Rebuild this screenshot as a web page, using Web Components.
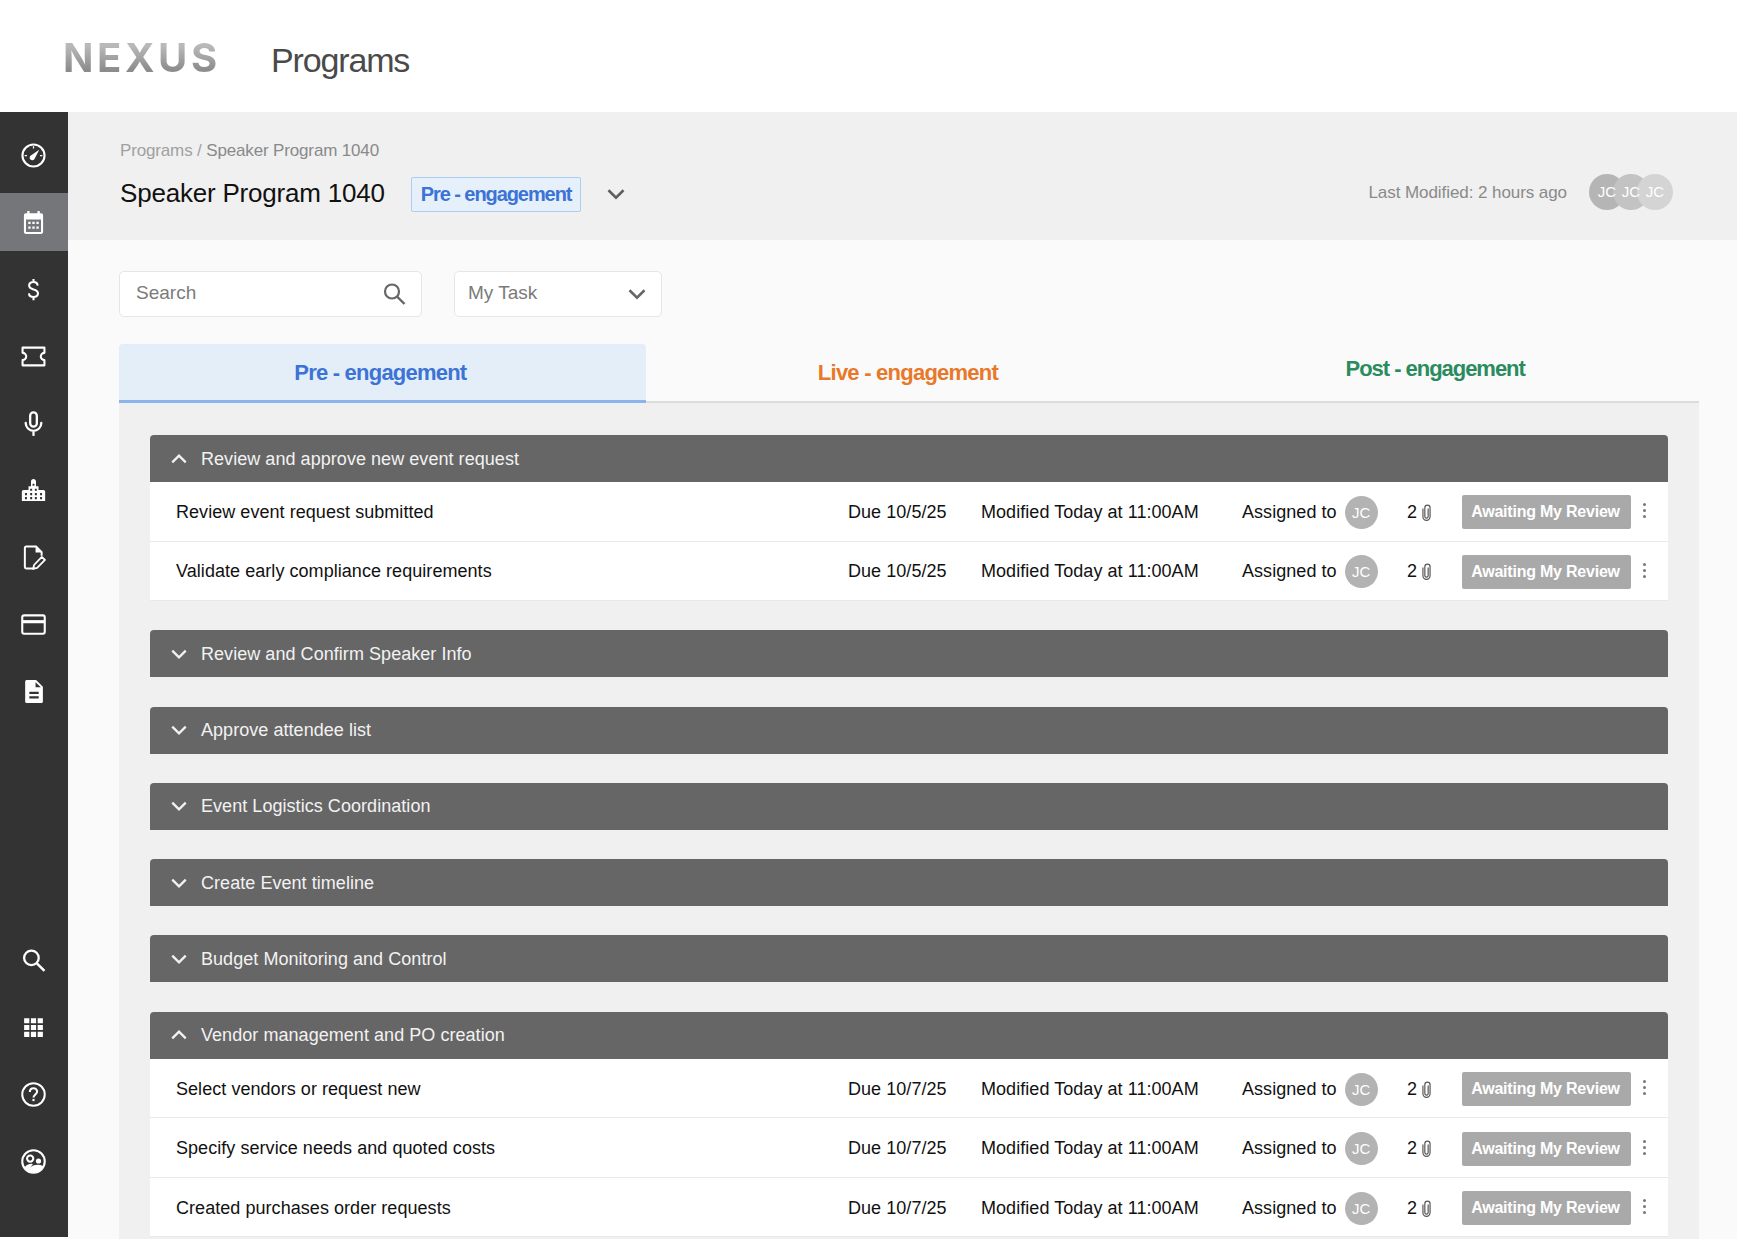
<!DOCTYPE html>
<html lang="en">
<head>
<meta charset="utf-8">
<title>Programs</title>
<style>
  html, body { margin: 0; height: 1239px; overflow: hidden; background: #fff; }
  body { font-family: "Liberation Sans", Arial, sans-serif; }
</style>
</head>
<body>
<nx-app>
  <nx-topbar slot="top" heading="Programs"></nx-topbar>
  <nx-sidebar slot="side"></nx-sidebar>
  <nx-program-header slot="head" crumb="Speaker Program 1040" name="Speaker Program 1040" stage="Pre - engagement" modified="Last Modified: 2 hours ago"></nx-program-header>
  <nx-toolbar slot="main"></nx-toolbar>
  <nx-tabs slot="main"></nx-tabs>
  <nx-panel slot="main">
    <nx-group label="Review and approve new event request" open>
      <nx-row name="Review event request submitted" due="Due 10/5/25"></nx-row>
      <nx-row name="Validate early compliance requirements" due="Due 10/5/25"></nx-row>
    </nx-group>
    <nx-group label="Review and Confirm Speaker Info"></nx-group>
    <nx-group label="Approve attendee list"></nx-group>
    <nx-group label="Event Logistics Coordination"></nx-group>
    <nx-group label="Create Event timeline"></nx-group>
    <nx-group label="Budget Monitoring and Control"></nx-group>
    <nx-group label="Vendor management and PO creation" open>
      <nx-row name="Select vendors or request new" due="Due 10/7/25"></nx-row>
      <nx-row name="Specify service needs and quoted costs" due="Due 10/7/25"></nx-row>
      <nx-row name="Created purchases order requests" due="Due 10/7/25"></nx-row>
    </nx-group>
  </nx-panel>
</nx-app>

<script>
// Iconos dibujados a mano sobre una caja de 24x24
const ICONS = {
  gauge: '<circle cx="12" cy="12" r="10.600" fill="none" stroke="currentColor" stroke-width="2"/><path d="M17.500 6.500 9.800 11.800a2.500 2.500 0 1 0 3.300 3.300z" fill="currentColor"/><path d="M12 3v2.200M3.500 12h2.200M20.500 12h-2.200" stroke="currentColor" stroke-width="1.200"/>',
  calendar: '<path fill-rule="evenodd" d="M6 1h2.200v2.200h7.600V1H18v2.200h1.400c1 0 1.800.8 1.800 1.800v16.200c0 1-.8 1.800-1.800 1.800H4.600c-1 0-1.800-.8-1.800-1.800V5c0-1 .8-1.800 1.800-1.800H6zM4.800 9v12h14.400V9z" fill="currentColor"/><path d="M7 11.300h2.200v2.200H7zm3.900 0h2.200v2.200h-2.200zm3.900 0H17v2.200h-2.200zM7 15.800h2.200V18H7zm3.900 0h2.200V18h-2.200zm3.900 0H17V18h-2.200z" fill="currentColor"/>',
  dollar: '<path d="M16 8.200C15.800 6 14.200 4.800 12 4.800c-2.400 0-4.200 1.300-4.200 3.400 0 2 1.700 3 4.200 3.700 2.600.7 4.300 1.700 4.300 3.800 0 2.200-1.900 3.500-4.300 3.500-2.500 0-4.200-1.300-4.400-3.500M12 1.800v3M12 19.200v3" fill="none" stroke="currentColor" stroke-width="2"/>',
  ticket: '<path d="M1.500 3.500h21v5a3.500 3.500 0 0 0 0 7v5h-21v-5a3.500 3.500 0 0 0 0-7z" fill="none" stroke="currentColor" stroke-width="2" stroke-linejoin="round"/>',
  mic: '<rect x="8.800" y="1.300" width="6.400" height="13.700" rx="3.200" fill="none" stroke="currentColor" stroke-width="2.200"/><path d="M4.500 11.500a7.500 7.500 0 0 0 15 0M12 19v4" fill="none" stroke="currentColor" stroke-width="2.200" stroke-linecap="round"/>',
  building: '<path fill-rule="evenodd" d="M12 1c1.300 0 2.400 1 2.400 2.300v4.700h2.400v3.500h4.700c1 0 1.700.8 1.700 1.700v8.300c0 .3-.3.500-.6.500H1.400c-.3 0-.6-.2-.6-.5v-8.300c0-1 .8-1.700 1.700-1.700h4.700V8h2.400V3.300c0-1.300 1-2.300 2.400-2.300zM3.800 14.500v2h1.900v-2zm0 3.800v2h1.900v-2zm5-8v2h1.900v-2zm0 4.200v2h1.900v-2zm0 3.800v2h1.900v-2zm4.500-8v2h1.900v-2zm0 4.200v2h1.900v-2zm0 3.800v2h1.900v-2zm5-3.800v2h1.900v-2zm0 3.800v2h1.900v-2zM11.100 5.500v2h1.800v-2z" fill="currentColor"/>',
  noteedit: '<path d="M12 22.500H5c-.8 0-1.300-.6-1.300-1.300V2.800c0-.7.5-1.300 1.300-1.300h9.500l5.300 5.300v3.500" fill="none" stroke="currentColor" stroke-width="1.900"/><path d="M14 1.500v5.800h5.800z" fill="currentColor"/><path d="m20 11.500 3 2.800-7.500 7.700-3.800 1 .8-3.800z" fill="none" stroke="currentColor" stroke-width="1.700" stroke-linejoin="round"/>',
  card: '<rect x="1.200" y="3.200" width="21.600" height="17.600" rx="1.800" fill="none" stroke="currentColor" stroke-width="2"/><rect x="1" y="7.800" width="22" height="3" fill="currentColor"/>',
  doc: '<path fill-rule="evenodd" d="M5.800 1h8.700L21 7.500v14c0 1-.8 1.500-1.800 1.500H5.800C4.800 23 4 22.500 4 21.500v-19C4 1.500 4.800 1 5.800 1zM8 12.200v2.200h9v-2.200zm0 4.300v2.200h9v-2.200z" fill="currentColor"/><path d="M14 3.200V8h5z" fill="#333"/>',
  search: '<circle cx="10" cy="9.500" r="7" fill="none" stroke="currentColor" stroke-width="2.200"/><path d="m15 14.500 7.500 7.500" fill="none" stroke="currentColor" stroke-width="2.400"/>',
  apps: '<path d="M3 3h5v5H3zm6.500 0h5v5h-5zM16 3h5v5h-5zM3 9.500h5v5H3zm6.500 0h5v5h-5zm6.500 0h5v5h-5zM3 16h5v5H3zm6.500 0h5v5h-5zm6.500 0h5v5h-5z" fill="currentColor"/>',
  help: '<circle cx="12" cy="12" r="10.800" fill="none" stroke="currentColor" stroke-width="1.900"/><path d="M8.500 9.500c0-2 1.500-3.500 3.500-3.500s3.500 1.400 3.500 3.200c0 2.600-3.500 2.900-3.500 5.600" fill="none" stroke="currentColor" stroke-width="2"/><rect x="11" y="16.200" width="2" height="2.200" fill="currentColor"/>',
  people: '<circle cx="12" cy="12" r="10.800" fill="none" stroke="currentColor" stroke-width="2"/><circle cx="8.800" cy="9.200" r="3" fill="none" stroke="currentColor" stroke-width="2"/><circle cx="16.800" cy="11.500" r="2.500" fill="currentColor"/><path d="M3.500 17.500c2-2.600 4.500-3.300 6.500-3.300l1.500.2-3 3.800c3-3 8-4 13 -1.700-1.500 3.800-5.500 6.300-9.500 6.300-3.500 0-6.500-2-8.500-5.300z" fill="currentColor"/>',
  down: '<path d="M3 7.500 12 16.500 21 7.500" fill="none" stroke="currentColor" stroke-width="3"/>',
  up: '<path d="M3 16.500 12 7.500 21 16.500" fill="none" stroke="currentColor" stroke-width="3"/>',
  clip: '<path d="M7.500 7v10.500a4.500 4.500 0 0 0 9 0V6a3.300 3.300 0 0 0-6.600 0V17a2.100 2.100 0 0 0 4.200 0V7" fill="none" stroke="currentColor" stroke-width="1.500"/>'
};

class NxIcon extends HTMLElement {
  constructor() {
    super();
    this.attachShadow({ mode: 'open' });
    const size = this.getAttribute('size') || '24';
    const name = this.getAttribute('name');
    this.shadowRoot.innerHTML = `
      <style>
        :host { display: inline-flex; width: ${size}px; height: ${size}px; flex: none; }
        svg { width: 100%; height: 100%; display: block; }
      </style>
      <svg viewBox="0 0 24 24" aria-hidden="true">${ICONS[name] || ''}</svg>
    `;
  }
}
customElements.define('nx-icon', NxIcon);

class NxApp extends HTMLElement {
  constructor() {
    super();
    this.attachShadow({ mode: 'open' });
    this.shadowRoot.innerHTML = `
      <style>
        :host { display: grid; grid-template-columns: 68px 1fr; grid-template-rows: 112px 1fr; height: 1239px; overflow: hidden; }
        .top { grid-column: 1 / 3; }
        .side { grid-row: 2; height: 1125px; }
        .content { grid-row: 2; background: #fafafa; min-width: 0; overflow: hidden; }
        .body { padding: 31px 38px 0 51px; }
      </style>
      <div class="top"><slot name="top"></slot></div>
      <div class="side"><slot name="side"></slot></div>
      <div class="content">
        <slot name="head"></slot>
        <div class="body"><slot name="main"></slot></div>
      </div>
    `;
  }
}
customElements.define('nx-app', NxApp);

class NxTopbar extends HTMLElement {
  constructor() {
    super();
    this.attachShadow({ mode: 'open' });
    const heading = this.getAttribute('heading') || '';
    this.shadowRoot.innerHTML = `
      <style>
        :host { display: flex; align-items: center; height: 112px; padding-left: 63px; background: #fff; box-sizing: border-box; }
        .logo {
          font: 700 40px/1 Inter, sans-serif; letter-spacing: 3.6px; width: 209px;
          background: linear-gradient(180deg, #b9b9b9 20%, #8c8c8c 80%);
          -webkit-background-clip: text; background-clip: text; color: transparent;
          position: relative; top: 2px;
        }
        h1 { margin: 0; font: 400 34px/1 "Liberation Sans", sans-serif; letter-spacing: -1.15px; color: #4a4a4a; position: relative; top: 4px; left: -1px; }
      </style>
      <div class="logo">NEXUS</div>
      <h1>${heading}</h1>
    `;
  }
}
customElements.define('nx-topbar', NxTopbar);

class NxSidebar extends HTMLElement {
  constructor() {
    super();
    this.attachShadow({ mode: 'open' });
    const top = ['gauge', 'calendar', 'dollar', 'ticket', 'mic', 'building', 'noteedit', 'card', 'doc'];
    const bottom = ['search', 'apps', 'help', 'people'];
    const item = (name, active) =>
      `<div class="item${active ? ' active' : ''}"><nx-icon name="${name}" size="25"></nx-icon></div>`;
    this.shadowRoot.innerHTML = `
      <style>
        :host { display: flex; flex-direction: column; justify-content: space-between; height: 100%; box-sizing: border-box; padding: 14px 0 47px; background: #333; color: #fff; }
        .group { display: flex; flex-direction: column; gap: 9px; }
        .item { height: 58px; display: flex; align-items: center; justify-content: center; padding-right: 1px; }
        .active { background: #757679; }
      </style>
      <div class="group">${top.map((n, i) => item(n, i === 1)).join('')}</div>
      <div class="group">${bottom.map(n => item(n)).join('')}</div>
    `;
  }
}
customElements.define('nx-sidebar', NxSidebar);

class NxProgramHeader extends HTMLElement {
  constructor() {
    super();
    this.attachShadow({ mode: 'open' });
    const crumb = this.getAttribute('crumb');
    const name = this.getAttribute('name');
    const stage = this.getAttribute('stage');
    const modified = this.getAttribute('modified');
    this.shadowRoot.innerHTML = `
      <style>
        :host { display: block; height: 128px; box-sizing: border-box; padding: 29px 64px 0 52px; background: #f0f0f0; }
        .crumb { font-size: 17px; line-height: 20px; color: #8a8a8a; letter-spacing: -.15px; }
        .crumb span { color: #a0a0a0; }
        .line { display: flex; align-items: center; margin-top: 15px; height: 35px; }
        h2 { margin: 0; font-size: 26px; font-weight: 400; color: #111; letter-spacing: -.2px; }
        .stage {
          margin-left: 26px; height: 35px; box-sizing: border-box; padding: 0 9px; display: flex; align-items: center;
          border: 1px solid #a9cdf3; border-radius: 2px; background: #e5f0fb; color: #3b73d6;
          font-size: 20px; font-weight: 700; letter-spacing: -1.08px; position: relative; top: 1px;
        }
        .chev { margin-left: 25px; color: #5e5e5e; }
        .mod { margin-left: auto; font-size: 17px; color: #8a8a8a; letter-spacing: -.07px; position: relative; top: -1px; }
        .faces { display: flex; flex-direction: row-reverse; margin-left: 22px; position: relative; top: -2px; }
        .face {
          width: 36px; height: 36px; border-radius: 50%; margin-left: -12px; display: flex; align-items: center; justify-content: center;
          font-size: 15px; color: #fff;
        }
        .face span { position: relative; z-index: 5; color: #fff; }
        .face:last-child { margin-left: 0; background: #b5b5b5; }
        .face:nth-child(2) { background: #c3c3c3; }
        .face:nth-child(1) { background: #d4d4d4; }
      </style>
      <div class="crumb"><span>Programs /</span> ${crumb}</div>
      <div class="line">
        <h2>${name}</h2>
        <div class="stage">${stage}</div>
        <nx-icon class="chev" name="down" size="20"></nx-icon>
        <div class="mod">${modified}</div>
        <div class="faces">
          <div class="face"><span>JC</span></div>
          <div class="face"><span>JC</span></div>
          <div class="face"><span>JC</span></div>
        </div>
      </div>
    `;
  }
}
customElements.define('nx-program-header', NxProgramHeader);

class NxToolbar extends HTMLElement {
  constructor() {
    super();
    this.attachShadow({ mode: 'open' });
    this.shadowRoot.innerHTML = `
      <style>
        :host { display: flex; gap: 32px; height: 46px; margin-bottom: 27px; }
        .box {
          display: flex; align-items: center; justify-content: space-between; box-sizing: border-box; height: 46px;
          background: #fff; border: 1px solid #e6e6e6; border-radius: 5px; font-size: 19px; color: #7b7b7b;
        }
        .search { width: 303px; padding: 0 15px 0 16px; }
        .select { width: 208px; padding: 0 14px 0 13px; }
        nx-icon { color: #666; }
        span { position: relative; top: -1px; }
      </style>
      <div class="box search"><span>Search</span><nx-icon name="search" size="24"></nx-icon></div>
      <div class="box select"><span>My Task</span><nx-icon name="down" size="20"></nx-icon></div>
    `;
  }
}
customElements.define('nx-toolbar', NxToolbar);

class NxTabs extends HTMLElement {
  constructor() {
    super();
    this.attachShadow({ mode: 'open' });
    this.shadowRoot.innerHTML = `
      <style>
        :host { display: grid; grid-template-columns: repeat(3, 1fr); height: 59px; border-bottom: 2px solid #dcdcdc; box-sizing: border-box; }
        .tab {
          display: flex; align-items: center; justify-content: center; height: 59px; box-sizing: border-box;
          font-size: 22px; font-weight: 700;
        }
        .pre { color: #3b73d6; background: #e4eef8; border-bottom: 3px solid #8cb4ea; border-radius: 4px 4px 0 0; padding: 2px 4px 0 0; letter-spacing: -.78px; }
        .live { color: #e8782a; border-bottom: 2px solid transparent; letter-spacing: -.76px; padding-right: 2px; }
        .post { color: #2a8c5e; padding: 0 1px 9px 0; letter-spacing: -1.03px; }
      </style>
      <div class="tab pre">Pre - engagement</div>
      <div class="tab live">Live - engagement</div>
      <div class="tab post">Post - engagement</div>
    `;
  }
}
customElements.define('nx-tabs', NxTabs);

class NxPanel extends HTMLElement {
  constructor() {
    super();
    this.attachShadow({ mode: 'open' });
    this.shadowRoot.innerHTML = `
      <style>
        :host { display: flex; flex-direction: column; gap: 29.3px; padding: 32px 31px 40px; background: #f0f0f0; }
      </style>
      <slot></slot>
    `;
  }
}
customElements.define('nx-panel', NxPanel);

class NxGroup extends HTMLElement {
  constructor() {
    super();
    this.attachShadow({ mode: 'open' });
    const label = this.getAttribute('label');
    const open = this.hasAttribute('open');
    this.shadowRoot.innerHTML = `
      <style>
        :host { display: block; }
        .head {
          display: flex; align-items: center; gap: 13px; height: 47px; box-sizing: border-box; padding-left: 20px;
          background: #666; border-radius: 4px 4px 0 0; font-size: 18px; color: #f2f2f2; letter-spacing: .05px;
        }
        .head span { padding-top: 1px; }
        .rows { background: #fff; }
      </style>
      <div class="head"><nx-icon name="${open ? 'up' : 'down'}" size="18"></nx-icon><span>${label}</span></div>
      ${open ? '<div class="rows"><slot></slot></div>' : ''}
    `;
  }
}
customElements.define('nx-group', NxGroup);

class NxRow extends HTMLElement {
  constructor() {
    super();
    this.attachShadow({ mode: 'open' });
    const name = this.getAttribute('name');
    const due = this.getAttribute('due');
    this.shadowRoot.innerHTML = `
      <style>
        :host {
          display: grid; grid-template-columns: 672px 133px 261px 165px 55px 169px 1fr; align-items: center;
          height: 59.500px; box-sizing: border-box; padding: 2px 0 0 26px;
          border-bottom: 1px solid #e9e9e9; font-size: 18px; color: #111; letter-spacing: .05px;
        }
        .who { display: flex; align-items: center; gap: 8px; }
        .av {
          width: 33px; height: 33px; border-radius: 50%; background: #b3b3b3; color: #fff; font-size: 15px; letter-spacing: 0;
          display: flex; align-items: center; justify-content: center;
        }
        .count { display: flex; align-items: center; gap: 0; }
        .count nx-icon { color: #555; }
        .status {
          height: 34px; box-sizing: border-box; padding-right: 2px; border-radius: 2px; background: #a9a9a9; color: #fff; font-size: 16px; font-weight: 700; letter-spacing: -.22px;
          display: flex; align-items: center; justify-content: center;
        }
        .more { display: flex; flex-direction: column; gap: 3px; margin: -3px 0 0 12px; }
        .more i { width: 3px; height: 3px; border-radius: 50%; background: #777; }
      </style>
      <span>${name}</span>
      <span>${due}</span>
      <span>Modified Today at 11:00AM</span>
      <span class="who">Assigned to <span class="av">JC</span></span>
      <span class="count">2 <nx-icon name="clip" size="19"></nx-icon></span>
      <span class="status">Awaiting My Review</span>
      <span class="more"><i></i><i></i><i></i></span>
    `;
  }
}
customElements.define('nx-row', NxRow);
</script>
</body>
</html>
